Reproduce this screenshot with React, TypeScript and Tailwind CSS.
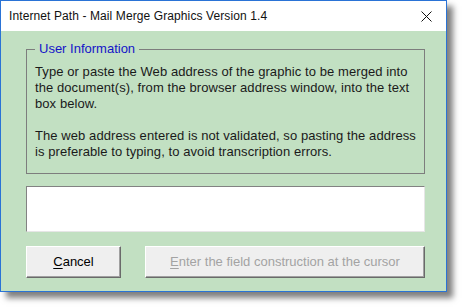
import React from 'react';

const bodyFont = { fontFamily: '"Liberation Sans", Arial, sans-serif' };

const InternetPathDialog: React.FC = () => {
  return (
    <div className="w-[462px] h-[307px] bg-white" style={bodyFont}>
      <div className="w-[447px] h-[292px] flex flex-col border border-[#2a73d6] bg-white shadow-[6px_6px_6px_rgba(0,0,0,0.5)]">
        {/* title bar */}
        <div className="h-[30px] flex items-center justify-between pl-[8px] pr-[9px]">
          <span className="text-[12px] tracking-[0.1px] text-[#111]">
            Internet Path - Mail Merge Graphics Version 1.4
          </span>
          <svg width="11" height="11" viewBox="0 0 11 11" className="mr-[5px]">
            <path d="M0.5 0.5 L10.5 10.5 M10.5 0.5 L0.5 10.5" stroke="#111" strokeWidth="1" />
          </svg>
        </div>

        <div className="flex-1 bg-[#c2e0c2] pl-[25px] pr-[21px] pt-[10px]">
          <fieldset className="border border-[#7d7d7d] px-[8px] pt-[7px] pb-[13px]">
            <legend className="px-[4px] text-[13px] leading-[16px] text-[#1414c8]">User Information</legend>
            <div className="text-[13px] leading-[16px] tracking-[0.08px] whitespace-nowrap text-[#1a1a1a]">
              <p>
                Type or paste the Web address of the graphic to be merged into
                <br />
                the document(s), from the browser address window, into the text
                <br />
                box below.
              </p>
              <p className="mt-[16px]">
                The web address entered is not validated, so pasting the address
                <br />
                is preferable to typing, to avoid transcription errors.
              </p>
            </div>
          </fieldset>

          <input
            type="text"
            className="mt-[12px] block w-full h-[46px] bg-white border border-t-[#828282] border-l-[#828282] border-b-[#e6e6e6] border-r-[#e6e6e6] outline-none"
          />

          <div className="mt-[14px] flex gap-[24px]">
            <button className="w-[95px] h-[32px] bg-[#efefef] border border-t-white border-l-white border-b-[#6a6a6a] border-r-[#6a6a6a] shadow-[inset_-1px_-1px_0_#a0a0a0] text-[13px] text-black">
              <span className="underline underline-offset-2">C</span>ancel
            </button>
            <button
              disabled
              className="w-[280px] h-[32px] bg-[#efefef] border border-t-white border-l-white border-b-[#6a6a6a] border-r-[#6a6a6a] shadow-[inset_-1px_-1px_0_#a0a0a0] text-[13px] text-[#a3a3a3]"
            >
              <span className="underline underline-offset-2">E</span>nter the field construction at the cursor
            </button>
          </div>
        </div>
      </div>
    </div>
  );
};

export default InternetPathDialog;
